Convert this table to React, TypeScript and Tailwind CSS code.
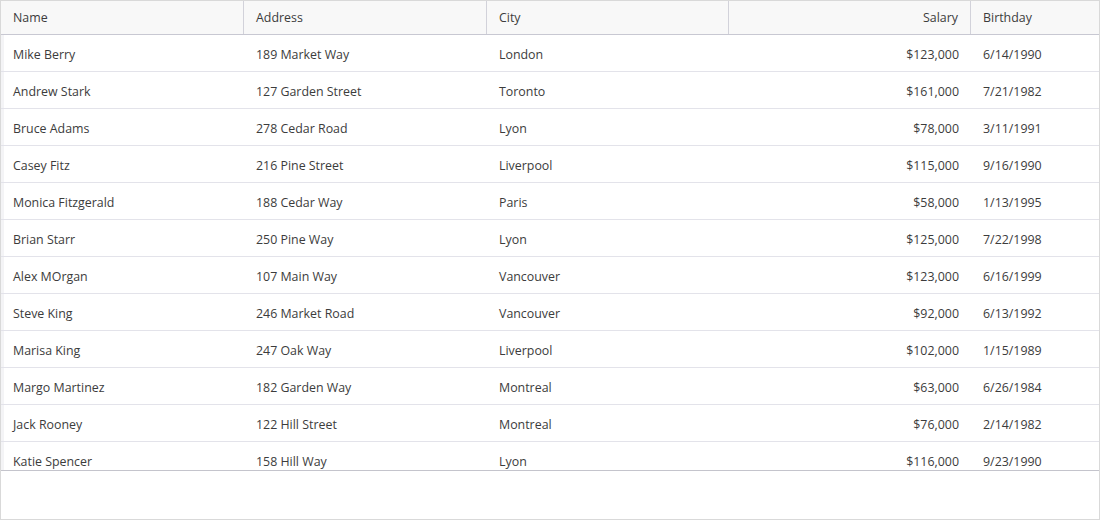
const rows = [
  ['Mike Berry', '189 Market Way', 'London', '$123,000', '6/14/1990'],
  ['Andrew Stark', '127 Garden Street', 'Toronto', '$161,000', '7/21/1982'],
  ['Bruce Adams', '278 Cedar Road', 'Lyon', '$78,000', '3/11/1991'],
  ['Casey Fitz', '216 Pine Street', 'Liverpool', '$115,000', '9/16/1990'],
  ['Monica Fitzgerald', '188 Cedar Way', 'Paris', '$58,000', '1/13/1995'],
  ['Brian Starr', '250 Pine Way', 'Lyon', '$125,000', '7/22/1998'],
  ['Alex MOrgan', '107 Main Way', 'Vancouver', '$123,000', '6/16/1999'],
  ['Steve King', '246 Market Road', 'Vancouver', '$92,000', '6/13/1992'],
  ['Marisa King', '247 Oak Way', 'Liverpool', '$102,000', '1/15/1989'],
  ['Margo Martinez', '182 Garden Way', 'Montreal', '$63,000', '6/26/1984'],
  ['Jack Rooney', '122 Hill Street', 'Montreal', '$76,000', '2/14/1982'],
  ['Katie Spencer', '158 Hill Way', 'Lyon', '$116,000', '9/23/1990'],
]

const cols = 'grid grid-cols-[243px_243px_242px_242px_1fr]'

function App(): JSX.Element {
  return (
    <div
      className="w-[1100px] h-[520px] border border-[#d9d9d9] bg-white flex flex-col text-[12.4px] text-[#3c3c3c]"
      style={{ fontFamily: '"Open Sans", "Noto Sans", sans-serif' }}
    >
      <div className={`${cols} h-[34px] shrink-0 bg-[#f8f8f8] border-b border-[#c8c8d2]`}>
        <div className="flex items-center px-3 pt-[2px] border-r border-[#d2d2da]">Name</div>
        <div className="flex items-center px-3 pt-[2px] border-r border-[#d2d2da]">Address</div>
        <div className="flex items-center px-3 pt-[2px] border-r border-[#d2d2da]">City</div>
        <div className="flex items-center justify-end px-3 pt-[2px] border-r border-[#d2d2da]">Salary</div>
        <div className="flex items-center px-3 pt-[2px]">Birthday</div>
      </div>

      <div className="h-[436px] shrink-0 overflow-hidden border-b border-[#c4c4cc]">
        {rows.map((r) => (
          <div key={r[0]} className={`${cols} h-[37px] border-b border-[#e3e3ea]`}>
            <div className="flex items-center px-3 pt-[5px] border-l-[3px] border-[#f4f4f6] -ml-[0px] pl-[9px]">{r[0]}</div>
            <div className="flex items-center px-3 pt-[5px]">{r[1]}</div>
            <div className="flex items-center px-3 pt-[5px]">{r[2]}</div>
            <div className="flex items-center justify-end px-3 pt-[5px]">{r[3]}</div>
            <div className="flex items-center px-3 pt-[5px]">{r[4]}</div>
          </div>
        ))}
      </div>

      <div className="flex-1" />
    </div>
  )
}

export default App
